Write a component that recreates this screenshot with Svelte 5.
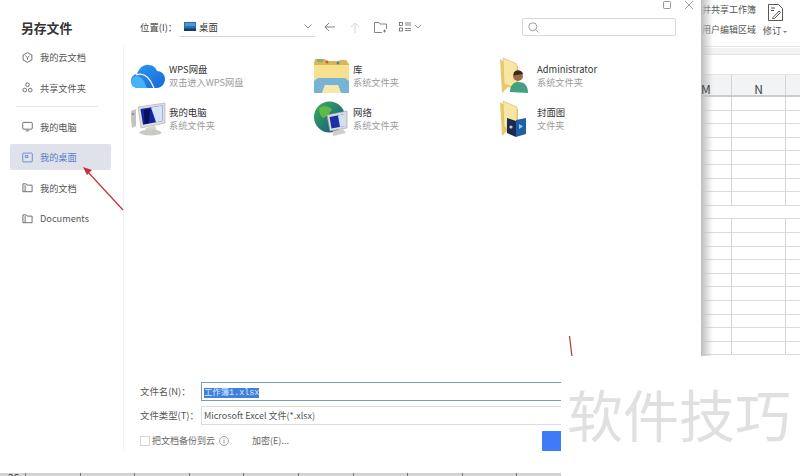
<script>
  const navTop = [
    { label: '我的云文档', icon: 'cloud' },
    { label: '共享文件夹', icon: 'share' }
  ];
  const navBottom = [
    { label: '我的电脑', icon: 'pc' },
    { label: '我的桌面', icon: 'desk', active: true },
    { label: '我的文档', icon: 'folder' },
    { label: 'Documents', icon: 'folder' }
  ];
  const files = [
    { name: 'WPS网盘', sub: '双击进入WPS网盘', icon: 'wps' },
    { name: '库', sub: '系统文件夹', icon: 'lib' },
    { name: 'Administrator', sub: '系统文件夹', icon: 'admin' },
    { name: '我的电脑', sub: '系统文件夹', icon: 'computer' },
    { name: '网络', sub: '系统文件夹', icon: 'net' },
    { name: '封面图', sub: '文件夹', icon: 'cover' }
  ];
  const rows = Array.from({ length: 19 }, (_, i) => i);
  const ticks = Array.from({ length: 10 }, (_, i) => i);
</script>

{#snippet screen()}
  <g>
    <path d="M1 11 L6 9 V26 L2 28 Q0.5 20 1 11 Z" fill="#c4c4be" />
    <circle cx="3" cy="14" r="1" fill="#7d8a5f" />
    <path d="M8 7 L35 3 V23 L11 28 Z" fill="#dedede" stroke="#a9a9a9" stroke-width=".6" />
    <path d="M10.5 9 L32.5 5.6 V21 L13 24.8 Z" fill="#16269c" />
    <path d="M21 7.5 L32.5 5.6 V21 L26 22.2 Z" fill="#d5e3f8" />
    <path d="M14 10 L20 9 L19 23 L14.5 23.8 Z" fill="#071058" />
    <path d="M16 28 L25 25.5 L27 31 L14 33 Z" fill="#d4d4d0" />
    <ellipse cx="20.5" cy="32.5" rx="11" ry="3" fill="#c8c8c5" />
  </g>
{/snippet}

{#snippet folder()}
  <g>
    <path d="M2 2 L10 8 L20 9 V33 L10 30 L4 36 Z" fill="#e9c867" />
    <path d="M5 1 L19 7 V32 L6 27 Z" fill="#f8e7a4" stroke="#d9b95c" stroke-width=".6" />
  </g>
{/snippet}

{#snippet navIcon(kind)}
  <svg class="nav-icon" viewBox="0 0 12 12" fill="none" stroke="currentColor" stroke-width=".9">
    {#if kind === 'cloud'}
      <path d="M6 .8 L10.8 3.3 V8.7 L6 11.2 L1.2 8.7 V3.3 Z" />
      <path d="M3.8 4.2 L6 6.3 L8.2 4.2 M6 6.3 V8.4" />
    {:else if kind === 'share'}
      <circle cx="6" cy="3" r="2" />
      <circle cx="3" cy="8.8" r="2" />
      <circle cx="9" cy="8.8" r="2" />
    {:else if kind === 'pc'}
      <rect x=".8" y="1.5" width="10.4" height="7.4" rx="1" />
      <path d="M4 10.7 H8" />
    {:else if kind === 'desk'}
      <rect x=".8" y="1.2" width="10.4" height="9.6" rx=".8" />
      <path d="M3.6 3.8 H6.4 V6 H3.6 Z" />
    {:else}
      <path d="M1 2 H4.6 L5.6 3.4 H11 V10.6 H1 Z" />
      <path d="M3.4 3.4 V10.6" />
    {/if}
  </svg>
{/snippet}

{#snippet fileIcon(kind)}
  <svg class="file-icon" viewBox="0 0 38 38">
    <defs>
      <linearGradient id="cl" x1="0" y1="0" x2="1" y2="1">
        <stop offset="0" stop-color="#2f9bf4" />
        <stop offset="1" stop-color="#1668d8" />
      </linearGradient>
      <linearGradient id="gl" x1="0" y1="0" x2="1" y2="1">
        <stop offset="0" stop-color="#3fae57" />
        <stop offset="1" stop-color="#0d4f8c" />
      </linearGradient>
    </defs>
    {#if kind === 'wps'}
      <g transform="translate(1 0)">
        <path d="M7 31 C2 31 0 27 0 24 C0 20 3 17 6 17 C8 11 13 7 18 8 C22 8 25 11 26 14 C31 14 34 18 34 22 C34 27 30 31 26 31 Z" fill="url(#cl)" />
        <path d="M7 31 C2 31 0 27 0 24 C1 20 5 18 9 20 C13 22 14 27 16 31 Z" fill="#45b3f8" />
        <path d="M5 18 C13 15 19 21 23 31" fill="none" stroke="#fff" stroke-width="1.2" />
      </g>
    {:else if kind === 'lib'}
      <path d="M0 7 L1 2 H11 L13 4 H24 L26 3 H32 L35 7 V32 H0 Z" fill="#d8b75b" />
      <rect x="3" y="2" width="6" height="3" fill="#7fb56a" />
      <circle cx="13" cy="5" r="1.4" fill="#c8553d" />
      <circle cx="24" cy="6" r="1.4" fill="#3d87b5" />
      <path d="M0 8 H35 V35 H0 Z" fill="#f7e08f" />
      <path d="M0 24 L4 21 H31 L35 24 V36 H27 L24 28 H11 L8 36 H0 Z" fill="#76b4d6" />
      <path d="M11 28 H24 L27 36 H8 Z" fill="#f6e7ae" />
    {:else if kind === 'admin'}
      {@render folder()}
      <circle cx="20" cy="19" r="5" fill="#9c6b46" />
      <path d="M15.5 17 C16 12 24 12 25 17 L16 18.5 Z" fill="#3d2a1c" />
      <path d="M12 35 C12 28 16 25 20 25 C26 25 30 28 30 36 Z" fill="#45a07f" />
    {:else if kind === 'computer'}
      {@render screen()}
    {:else if kind === 'net'}
      <circle cx="15.5" cy="17" r="15.5" fill="url(#gl)" />
      <path d="M5 8 C10 5 16 6 18 10 C15 13 14 16 9 18 C6 16 5 12 5 8 Z M17 24 L22 21 L23 28 L18 31 Z" fill="#5cba46" />
      <path d="M13 15 L33 11 V28 L16 31 Z" fill="#dcdcdc" stroke="#9a9a9a" stroke-width=".6" />
      <path d="M15.5 17 L31 14 V26 L17.5 28.6 Z" fill="#1c2fa8" />
      <path d="M24 15.5 L31 14 V26 L26 27 Z" fill="#cfe0f7" />
      <path d="M19 31 L29 29 L32 33 L19 36 Z" fill="#cfcfcc" />
    {:else}
      {@render folder()}
      <path d="M9 18 L18 21 V37 L9 33 Z" fill="#1b2a4d" />
      <path d="M18 20 L28 18 V34 L18 37 Z" fill="#1f5fa6" />
      <path d="M21 24 L25 26.5 L21 29 Z" fill="#8fd0f2" />
      <circle cx="13" cy="27" r="1.6" fill="#b8c8e0" />
    {/if}
  </svg>
{/snippet}

<div class="page">
  <div class="top">
    <section class="dialog">
      <aside class="sidebar">
        <h1>另存文件</h1>
        <nav>
          {#each navTop as item}
            <div class="nav-item">{@render navIcon(item.icon)}<span>{item.label}</span></div>
          {/each}
          <div class="nav-line"></div>
          {#each navBottom as item}
            <div class="nav-item" class:active={item.active}>{@render navIcon(item.icon)}<span>{item.label}</span></div>
          {/each}
        </nav>
      </aside>

      <div class="main">
        <div class="win-buttons">
          <svg viewBox="0 0 8 8" width="8" height="8" fill="none" stroke="#8a8a8a" stroke-width=".9"><rect x=".5" y=".5" width="7" height="7" rx="1" /></svg>
          <svg viewBox="0 0 8 8" width="8" height="8" fill="none" stroke="#8a8a8a" stroke-width=".8"><path d="M0 0 L8 8 M8 0 L0 8" /></svg>
        </div>

        <div class="toolbar">
          <span class="loc-label">位置(I)：</span>
          <div class="loc">
            <svg viewBox="0 0 12 9" width="12" height="9"><rect width="12" height="9" fill="#2d6fb0" /><rect y="6.5" width="12" height="2.5" fill="#123a6a" /><rect x="1" y="1" width="10" height="3" fill="#4f97d6" /></svg>
            <span>桌面</span>
            <svg class="chev" viewBox="0 0 8 5" width="8" height="5" fill="none" stroke="#777" stroke-width=".8"><path d="M.5 .5 L4 4 L7.5 .5" /></svg>
          </div>
          <svg class="tool back" viewBox="0 0 11 10" width="11" height="10" fill="none" stroke="#666" stroke-width=".8"><path d="M11 5 H.8 M5 1 L1 5 L5 9" /></svg>
          <svg class="tool up" viewBox="0 0 10 11" width="10" height="11" fill="none" stroke="#d2d2d2" stroke-width=".9"><path d="M5 11 V1 M1 5 L5 1 L9 5" /></svg>
          <svg class="tool newf" viewBox="0 0 13 11" width="13" height="11" fill="none" stroke="#666" stroke-width=".8"><path d="M8 10.5 H.5 V.5 H5 L6 2 H12.5 V7 M10.5 7.5 V10.5 M9 9 H12" /></svg>
          <svg class="tool view" viewBox="0 0 23 10" width="23" height="10" fill="none" stroke="#666" stroke-width=".8"><rect x=".5" y=".5" width="3" height="3" /><rect x=".5" y="6" width="3" height="3" /><path d="M6 1 H12 M6 3 H12 M6 6.5 H12 M6 8.5 H12" /><path d="M16 3 L19 6 L22 3" stroke="#777" /></svg>
          <div class="search">
            <svg viewBox="0 0 11 11" width="11" height="11" fill="none" stroke="#888" stroke-width=".8"><circle cx="4.8" cy="4.8" r="4" /><path d="M7.8 7.8 L10.5 10.5" /></svg>
          </div>
        </div>

        <div class="files">
          {#each files as f}
            <div class="file">
              {@render fileIcon(f.icon)}
              <div class="file-text">
                <div class="file-name">{f.name}</div>
                <div class="file-sub">{f.sub}</div>
              </div>
            </div>
          {/each}
        </div>

        <form class="form">
          <div class="form-row">
            <label for="fname">文件名(N)：</label>
            <div class="input focus" id="fname"><mark>工作簿1.xlsx</mark></div>
          </div>
          <div class="form-row">
            <label for="ftype">文件类型(T)：</label>
            <div class="input" id="ftype">Microsoft Excel 文件(*.xlsx)</div>
          </div>
          <div class="form-foot">
            <span class="check"></span>
            <span>把文档备份到云</span>
            <svg class="info" viewBox="0 0 10 10" width="10" height="10" fill="none" stroke="#777" stroke-width=".7"><circle cx="5" cy="5" r="4.5" /><path d="M5 4 V7.6 M5 2.4 V3.2" /></svg>
            <span class="encrypt">加密(E)...</span>
            <span class="save"></span>
          </div>
        </form>
      </div>
    </section>

    <section class="sheet">
      <div class="ribbon">
        <div class="rib-text">
          <span>并共享工作簿</span>
          <span>用户编辑区域</span>
        </div>
        <div class="rib-btn">
          <svg viewBox="0 0 15 17" width="15" height="17" fill="none" stroke="#444" stroke-width=".9"><path d="M.5 .5 H10.5 L14.5 4.5 V16.5 H.5 Z M3 4 H7 M3 6.5 H6" /><path d="M5 13.5 L11 7 L12.5 8.5 L6.5 14.5 H4.5 Z" /></svg>
          <span>修订<i></i></span>
        </div>
      </div>
      <div class="formula"></div>
      <div class="head">
        <span class="col-a">M</span>
        <span class="col-b">N</span>
        <span class="col-c"></span>
      </div>
      {#each rows as r}
        <div class="row" class:blank={r === 8}>
          <span class="col-a"></span>
          <span class="col-b"></span>
          <span class="col-c"></span>
        </div>
      {/each}
      <div class="shade"></div>
    </section>
  </div>

  <div class="strip">
    <span class="num">26</span>
    {#each ticks as t}
      <span class="tick"></span>
    {/each}
  </div>

  <svg class="arrow" viewBox="0 0 800 476" width="800" height="476" fill="none">
    <path d="M123 210 L87 171" stroke="#c9303a" stroke-width="1.2" />
    <path d="M83 167 L92 170 L87 175 Z" fill="#c9303a" />
    <path d="M569.5 336 L572 357" stroke="#b8323c" stroke-width="1.2" />
  </svg>

  <div class="mark">软件技巧</div>
</div>

<style>
  :global(body) {
    margin: 0;
    background: #fff;
  }

  .page {
    position: relative;
    width: 800px;
    height: 476px;
    overflow: hidden;
    background: #fff;
    color: #333;
    font-family: "Noto Sans CJK SC", "Noto Sans", sans-serif;
    font-size: 9.2px;
    line-height: 12px;
  }

  .top {
    display: flex;
    height: 473px;
  }

  .dialog {
    display: flex;
    flex: none;
    width: 701px;
    background: #fff;
  }

  .sidebar {
    flex: none;
    width: 123px;
    height: 450px;
    box-sizing: border-box;
    padding-top: 18px;
  }

  h1 {
    margin: 0 0 6px 21px;
    height: 20px;
    font-size: 12.8px;
    line-height: 20px;
    font-weight: 700;
    color: #333;
  }

  nav {
    display: flex;
    flex-direction: column;
    gap: 4.5px;
  }

  .nav-item {
    display: flex;
    align-items: center;
    gap: 7px;
    box-sizing: border-box;
    width: 101px;
    height: 26px;
    margin-left: 10px;
    padding-left: 12px;
    border-radius: 2px;
    color: #555;
  }

  .nav-item.active {
    background: #dfe2eb;
    color: #5b80c4;
  }

  .nav-icon {
    flex: none;
    width: 11px;
    height: 11px;
  }

  .nav-line {
    height: 1px;
    margin: 1px 25px 2px 16px;
    background: #e8e8e8;
  }

  .main {
    flex: 1;
    display: flex;
    flex-direction: column;
    min-width: 0;
    background: linear-gradient(#f4f4f4, #f4f4f4) left 46px / 1px 404px no-repeat;
  }

  .win-buttons {
    display: flex;
    justify-content: flex-end;
    gap: 14px;
    height: 8px;
    padding: 1px 8px 0 0;
  }

  .toolbar {
    display: flex;
    align-items: center;
    height: 18px;
    margin: 9px 25px 0 17px;
    font-size: 9.4px;
  }

  .loc-label {
    width: 39px;
    color: #444;
  }

  .loc {
    display: flex;
    align-items: center;
    gap: 3px;
    box-sizing: border-box;
    width: 136px;
    height: 19px;
    margin-top: 1px;
    padding: 0 3px 1px 5px;
    border-bottom: 1px solid #d4d7dc;
  }

  .chev {
    margin-left: auto;
  }

  .tool {
    flex: none;
  }

  .back {
    margin-left: 9px;
  }

  .up {
    margin-left: 15px;
  }

  .newf {
    margin-left: 14px;
  }

  .view {
    margin-left: 12px;
  }

  .search {
    display: flex;
    align-items: center;
    box-sizing: border-box;
    width: 154px;
    height: 18px;
    margin-left: auto;
    padding-left: 5px;
    border: 1px solid #d9d9d9;
    border-radius: 2px;
  }

  .files {
    display: grid;
    grid-template-columns: 184px 184px 1fr;
    grid-auto-rows: 43px;
    flex: 1;
    align-content: start;
    margin-top: 18px;
    padding-left: 7px;
  }

  .file {
    display: flex;
    align-items: center;
    gap: 1px;
  }

  .file-icon {
    flex: none;
    width: 38px;
    height: 38px;
    overflow: visible;
  }

  .file-name {
    height: 13px;
    line-height: 13px;
    font-size: 9.4px;
    color: #333;
  }

  .file-sub {
    height: 13px;
    line-height: 13px;
    color: #9a9a9a;
  }

  .form {
    display: flex;
    flex-direction: column;
    height: 94px;
    padding-left: 17px;
    color: #555;
  }

  .form-row {
    display: flex;
    align-items: center;
    height: 24px;
    font-size: 9.4px;
  }

  .form-row label {
    flex: none;
    width: 61px;
  }

  .input {
    flex: none;
    width: 400px;
    box-sizing: border-box;
    height: 19px;
    padding: 0 2px;
    line-height: 17px;
    font-size: 9px;
    border: 1px solid #dcdcdc;
    border-right: 0;
    white-space: nowrap;
  }

  .input.focus {
    border-color: #7d9ab6;
  }

  mark {
    background: #3f80dc;
    color: #dce9fb;
    font-family: "Liberation Mono", "Noto Sans CJK SC", monospace;
    font-size: 8.4px;
  }

  .form-foot {
    display: flex;
    align-items: center;
    width: 430px;
    height: 24px;
    margin-top: 2px;
    font-size: 9px;
    color: #666;
  }

  .check {
    flex: none;
    width: 8px;
    height: 8px;
    margin-right: 2px;
    border: 1px solid #d6d6d6;
  }

  .info {
    margin-left: 4px;
  }

  .encrypt {
    margin-left: 23px;
  }

  .save {
    flex: none;
    width: 28px;
    height: 20px;
    margin-left: auto;
    background: #3f7bf6;
    border-radius: 1px;
  }

  .sheet {
    position: relative;
    flex: none;
    width: 99px;
    height: 356px;
    overflow: hidden;
    background: #fff;
  }

  .ribbon {
    display: flex;
    height: 47px;
    box-sizing: border-box;
    border-bottom: 1px solid #e6e6e6;
  }

  .rib-text {
    display: flex;
    flex-direction: column;
    gap: 8px;
    width: 58px;
    padding: 4px 0 0 1px;
    font-size: 9px;
    color: #555;
    white-space: nowrap;
  }

  .rib-btn {
    display: flex;
    flex-direction: column;
    align-items: center;
    width: 30px;
    padding-top: 4px;
    gap: 3px;
    color: #555;
  }

  .rib-btn i {
    display: inline-block;
    margin-left: 2px;
    border: 2px solid transparent;
    border-top-color: #777;
    vertical-align: -1px;
  }

  .formula {
    height: 7px;
    background: #f3f3f3;
    margin-top: 1px;
    border-bottom: 1px solid #e4e4e4;
    box-sizing: border-box;
  }

  .head {
    display: flex;
    height: 23px;
    margin-top: 19px;
    box-sizing: border-box;
    border-top: 1px solid #e4e4e4;
    border-bottom: 2px solid #c9ccd0;
    background: #f2f3f5;
    font-size: 12px;
    line-height: 27px;
    color: #444;
    text-align: center;
  }

  .head span {
    height: 100%;
  }

  .col-a {
    flex: none;
    width: 31px;
    box-sizing: border-box;
    border-right: 1px solid #d3d5d8;
  }

  .head .col-a {
    position: relative;
    z-index: 1;
    text-align: left;
  }

  .col-b {
    flex: none;
    width: 54px;
    box-sizing: border-box;
    border-right: 1px solid #d3d5d8;
  }

  .row {
    display: flex;
    height: 13.6px;
    box-sizing: border-box;
    border-bottom: 1px solid #d9dbde;
  }

  .row.blank .col-a,
  .row.blank .col-b {
    border-right: 0;
  }

  .shade {
    position: absolute;
    left: 0;
    top: 0;
    width: 12px;
    height: 100%;
    background: linear-gradient(to right, #bdbdbd, rgba(255, 255, 255, 0));
  }

  .strip {
    display: flex;
    height: 3px;
    overflow: hidden;
    background: #d3d3d3;
    padding-left: 25px;
    position: relative;
  }

  .num {
    position: absolute;
    left: 8px;
    top: -1px;
    font-size: 10px;
    line-height: 12px;
    color: #333;
  }

  .tick {
    flex: none;
    width: 54.6px;
    box-sizing: border-box;
    border-left: 1px solid #777;
  }

  .arrow {
    position: absolute;
    left: 0;
    top: 0;
    pointer-events: none;
  }

  .mark {
    position: absolute;
    left: 561px;
    top: 356px;
    width: 239px;
    height: 120px;
    box-sizing: border-box;
    padding: 25px 0 0 6px;
    background: #fff;
    color: #e0e0e0;
    font-size: 56px;
    line-height: 64px;
    white-space: nowrap;
  }
</style>
